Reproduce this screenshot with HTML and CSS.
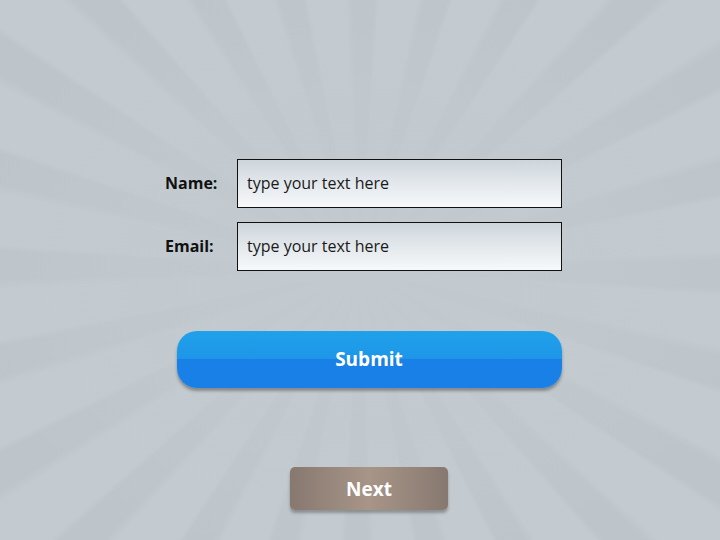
FILE: index.html
```html
<!DOCTYPE html>
<html>
<head>
<meta charset="utf-8">
<link rel="stylesheet" href="styles.css">
</head>
<body>
<div class="stage">
  <form class="form">
    <div class="row">
      <label class="label">Name:</label>
      <div class="field">type your text here</div>
    </div>
    <div class="row">
      <label class="label">Email:</label>
      <div class="field">type your text here</div>
    </div>
  </form>
  <div class="actions">
    <div class="submit"><span>Submit</span></div>
    <div class="next"><span>Next</span></div>
  </div>
</div>
</body>
</html>
```
FILE: styles.css
```css
html, body {
  margin: 0;
  padding: 0;
}
body {
  width: 720px;
  height: 540px;
  overflow: hidden;
  font-family: "Open Sans", "DejaVu Sans", sans-serif;
}
.stage {
  width: 720px;
  height: 540px;
  box-sizing: border-box;
  padding-top: 159px;
  background:
    radial-gradient(ellipse at 50% 50%, rgba(195,202,207,0.95) 0%, rgba(195,202,207,0.6) 45%, rgba(195,202,207,0) 80%),
    repeating-conic-gradient(from 4deg at 50% 50%, #c4cbd0 0deg 8deg, #bdc5ca 9.5deg 14deg, #c4cbd0 15deg);
}
.form {
  margin: 0 0 0 165px;
  display: flex;
  flex-direction: column;
  gap: 14px;
}
.row {
  display: flex;
  align-items: center;
}
.label {
  width: 72px;
  font-weight: 700;
  font-size: 16px;
  color: #111;
  position: relative;
  top: -1px;
}
.field {
  width: 325px;
  height: 49px;
  box-sizing: border-box;
  border: 1px solid #111;
  background: linear-gradient(to bottom, #cdd5db 0%, #e3e8ec 50%, #f7f9fa 100%);
  padding-left: 9px;
  padding-bottom: 1px;
  display: flex;
  align-items: center;
  font-size: 16px;
  color: #1a1a1a;
}
.actions {
  display: flex;
  flex-direction: column;
  align-items: center;
  padding-left: 18px;
}
.submit {
  margin-top: 60px;
  width: 385px;
  height: 57px;
  border-radius: 20px;
  background: linear-gradient(to bottom, #20a1ea 0%, #1d96e8 49%, #1880e6 49%, #1880e6 100%);
  box-shadow: 0 3px 3px rgba(60,60,60,0.45);
  display: flex;
  align-items: center;
  justify-content: center;
  color: #fff;
  font-weight: 700;
  font-size: 19px;
  padding-bottom: 1px;
  box-sizing: border-box;
}
.next {
  margin-top: 79px;
  width: 158px;
  height: 43px;
  border-radius: 5px;
  background: linear-gradient(to right, #877870 0%, #a79587 50%, #877870 100%);
  box-shadow: 0 3px 3px rgba(60,60,60,0.4);
  display: flex;
  align-items: center;
  justify-content: center;
  color: #fff;
  font-weight: 700;
  font-size: 19px;
}
```
